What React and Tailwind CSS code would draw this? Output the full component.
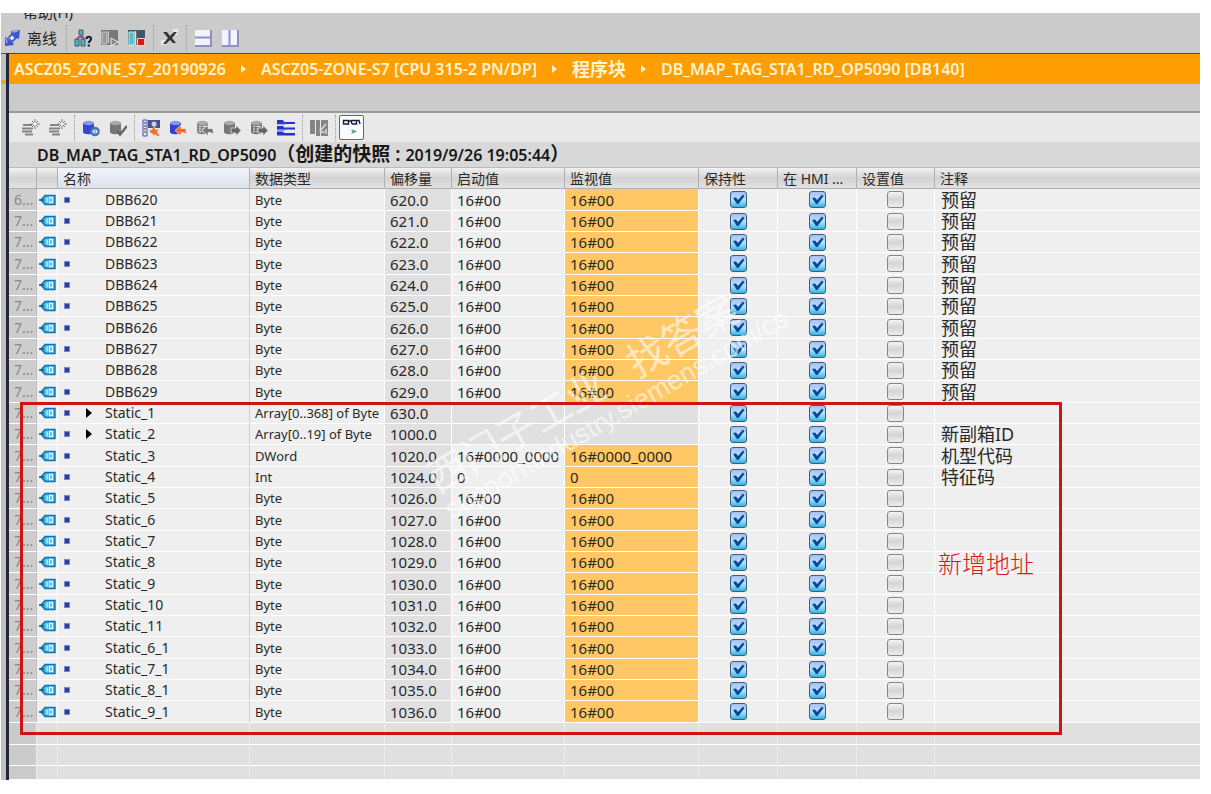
import { clsx } from 'clsx';

const reserved = Array.from({ length: 10 }, (_, i) => ({
  name: `DBB${620 + i}`, type: 'Byte', offset: `${620 + i}.0`, start: '16#00', monitor: '16#00', comment: '预留',
}));

const bytes = ['5', '6', '7', '8', '9', '10', '11', '6_1', '7_1', '8_1', '9_1'].map((n, i) => ({
  name: `Static_${n}`, type: 'Byte', offset: `${1026 + i}.0`, start: '16#00', monitor: '16#00', comment: '',
}));

const rows = [
  ...reserved,
  { name: 'Static_1', type: 'Array[0..368] of Byte', offset: '630.0', expandable: true, comment: '' },
  { name: 'Static_2', type: 'Array[0..19] of Byte', offset: '1000.0', expandable: true, comment: '新副箱ID' },
  { name: 'Static_3', type: 'DWord', offset: '1020.0', start: '16#0000_0000', monitor: '16#0000_0000', comment: '机型代码' },
  { name: 'Static_4', type: 'Int', offset: '1024.0', start: '0', monitor: '0', comment: '特征码' },
  ...bytes,
];

const columns = [
  { label: '', width: 'w-[28px]' },
  { label: '', width: 'w-[21px]' },
  { label: '名称', width: 'w-[192px]' },
  { label: '数据类型', width: 'w-[135px]' },
  { label: '偏移量', width: 'w-[67px]' },
  { label: '启动值', width: 'w-[113px]' },
  { label: '监视值', width: 'w-[134px]' },
  { label: '保持性', width: 'w-[79px]' },
  { label: '在 HMI ...', width: 'w-[79px]' },
  { label: '设置值', width: 'w-[78px]' },
  { label: '注释', width: '' },
];

const Svg = ({ children }) => (
  <svg viewBox="0 0 18 18" className="block h-[18px] w-[18px]" aria-hidden="true">{children}</svg>
);

const ToolButton = ({ label, children }) => (
  <button type="button" aria-label={label} className="h-[18px] w-[18px] shrink-0">
    <Svg>{children}</Svg>
  </button>
);

const Group = ({ children, first, tight }) => (
  <div className={clsx('flex h-[26px] items-center gap-[9px]', !first && 'border-l border-dotted border-[#999]', !first && (tight ? 'pl-[3px]' : 'pl-[7px]'))}>
    {children}
  </div>
);

// Database cylinder, shared by most of the editor toolbar icons
const Cylinder = ({ fill, top, lines }) => (
  <g>
    <path d="M1 4v9c0 3 11 3 11 0V4z" fill={fill} />
    <ellipse cx="6.500" cy="4" rx="5.500" ry="2.200" fill={top} />
    {lines && <path d="M3 7.500h2m1.500 0h4M3 10h2m1.500 0h4M3 12.500h2m1.500 0h4" stroke="#eee" strokeWidth="1.200" />}
  </g>
);

const Arrow = ({ left, fill }) => (
  <path
    d={left ? 'M6 11.500L12 6v3.500h5V12l1 3-4-1.500h-2V17z' : 'M18 11.500L13 6v3H8v5h5v3z'}
    fill={fill} stroke="#eee" strokeWidth=".7"
  />
);

const NewRow = () => (
  <>
    <path d="M1 6h9M0 9.500h11M0 12.500h10M3 15.500h8" stroke="#858585" strokeWidth="2" />
    <path d="M13 0v10M8.500 5H18M10 2l6 6M16 2l-6 6" stroke="#777" strokeWidth="1" />
    <circle cx="13" cy="5" r="1.800" fill="#f5f5f5" />
  </>
);

const TagIcon = () => (
  <svg viewBox="0 0 17 12" className="mx-auto block h-3 w-[17px]" aria-hidden="true">
    <path d="M2 6l4-4.500h10v9H6z" fill="#42b4e8" stroke="#0878b4" strokeWidth="1.400" />
    <path d="M0 6h5" stroke="#075f92" strokeWidth="1.600" />
    <path d="M8 3.500v5M10.500 3.500h3v5h-3z" stroke="#dff5ff" strokeWidth="1.300" fill="none" />
  </svg>
);

const CheckCell = ({ checked, label }) => (
  <td className="border-r border-b border-white bg-[#efefef] p-0">
    <div className="mx-auto grid h-[17px] w-[17px]">
      <input
        type="checkbox"
        aria-label={label}
        defaultChecked={checked}
        className="peer col-start-1 row-start-1 h-[17px] w-[17px] appearance-none rounded-[3px] border border-[#858585] bg-linear-to-b from-[#f4f4f4] via-[#d4d4d4] to-[#eee] checked:border-[#3b5f7c] checked:from-[#a9bff0] checked:via-[#b5e2fa] checked:to-[#22b4e6]"
      />
      <svg viewBox="0 0 17 17" className="pointer-events-none invisible col-start-1 row-start-1 peer-checked:visible" aria-hidden="true">
        <path d="M3 7l3-.5 2 2.500 5-5.500 1.500 1.500L8.500 13H7z" fill="#07479a" />
      </svg>
    </div>
  </td>
);

const Crumb = ({ children, last }) => (
  <>
    <a href="#" className="whitespace-nowrap">{children}</a>
    {!last && (
      <svg viewBox="0 0 5 8" className="mx-[15px] h-2 w-[5px] shrink-0" aria-hidden="true">
        <path d="M0 0l5 4-5 4z" fill="#fff3d0" />
      </svg>
    )}
  </>
);

const MainToolbar = () => (
  <header className="bg-[#cbcbcb]">
    <div className="flex h-2 items-end overflow-hidden pl-[22px] text-[15px]">
      <span className="leading-[18px]">帮助(H)</span>
    </div>
    <div className="flex h-8 items-center gap-[9px] pt-0.5 pl-0.5">
      <button type="button" className="flex items-center gap-1.5 text-[15px]">
        <Svg>
          <path d="M8 2l9-1-1 9-3-1-5-4zM2 8l3 1 5 5 1 2-9 1z" fill="#3f57cc" />
          <path d="M5 8l5-5 4 6-5 5z" fill="#3f57cc" />
          <path d="M3 9l1 5M9 3l6-1" stroke="#98a8f5" strokeWidth="1.500" />
          <path d="M6.500 9l2.500-2.500 2.500 2.500L9 11.500z" fill="#e5eaff" />
        </Svg>
        离线
      </button>
      <div className="flex gap-[7px]">
        <Group>
          <ToolButton label="可访问的设备">
            <path d="M5 1h4v5H5zM1 10h4v7H1zM7 10h4v7H7z" fill="#50b9b5" stroke="#39566c" />
            <path d="M7 6v3M3 10l2-2h4l1 2" stroke="#9c4c91" strokeWidth="2" fill="none" />
            <path d="M12.500 10c0-3 4.500-3 4.500 0 0 2-2.200 2-2.200 4M14.800 15.500v2" stroke="#171b3c" strokeWidth="2.200" fill="none" />
          </ToolButton>
          <ToolButton label="启动 CPU">
            <path d="M0 1h17v15H0z" fill="#777" />
            <path d="M1 3h5v12H1z" fill="#999" stroke="#ccc" />
            <path d="M7.500 2v12" stroke="#ccc" />
            <path d="M10 9l7 4-7 4z" fill="#888" stroke="#eee" />
          </ToolButton>
          <ToolButton label="停止 CPU">
            <path d="M0 1h17v15H0z" fill="#455467" />
            <path d="M1 3h5v13H1z" fill="#46c3c6" stroke="#d0eeee" />
            <path d="M7.500 2v14" stroke="#e0e0e0" strokeWidth="1.500" />
            <path d="M9.500 9.500h7v7h-7z" fill="#dc1515" stroke="#f6caca" />
          </ToolButton>
        </Group>
        <Group>
          <ToolButton label="交叉引用">
            <path d="M11 0h6v6h-4zM0 11h6v5H0z" fill="#e8e8e8" />
            <path d="M2 3h4l3 4 4-4h3l-5 6 4 5h-3l-3-3-4 4H2l5-6z" fill="#343434" />
          </ToolButton>
        </Group>
        <Group>
          <ToolButton label="水平拆分">
            <path d="M1 1h17v17H1z" fill="#8f8fc4" />
            <path d="M1 1h15v6.500H1zM1 9.500h15V16H1z" fill="#f3f3ff" />
          </ToolButton>
          <ToolButton label="垂直拆分">
            <path d="M1 1h17v17H1z" fill="#8f8fc4" />
            <path d="M1 1h6.500v15H1zM9.500 1H16v15H9.500z" fill="#f3f3ff" />
          </ToolButton>
        </Group>
      </div>
    </div>
  </header>
);

const EditorToolbar = () => (
  <div className="flex h-[31px] items-center gap-[7px] border-t-2 border-[#9a9a9a] bg-[#e9e9e9] pl-[13px]">
    <Group first>
      <ToolButton label="插入行"><NewRow /></ToolButton>
      <ToolButton label="添加行"><NewRow /></ToolButton>
    </Group>
    <Group>
      <ToolButton label="复位启动值">
        <Cylinder fill="#3448c8" top="#8796ee" />
        <circle cx="13" cy="12.500" r="4.800" fill="#4774b8" />
        <path d="M10 12.500l2.500-2.500v5zM16 12.500L13.500 10v5z" fill="#e5f2ff" />
      </ToolButton>
      <ToolButton label="更新接口">
        <Cylinder fill="#777" top="#aaa" />
        <path d="M8 12l3 3.500L18 7" stroke="#666" strokeWidth="2.500" fill="none" />
      </ToolButton>
    </Group>
    <Group>
      <ToolButton label="快照">
        <path d="M1 1h4v16H1z" fill="#e8e8f8" stroke="#3e49aa" />
        <path d="M2 4h2M2 7h2M2 10h2M2 13h2" stroke="#333" />
        <path d="M6 1h12v8H6z" fill="#485488" />
        <circle cx="12" cy="5" r="2.500" fill="#cbd2ef" />
        <path d="M7 12.500l6-5v3h4l-2 2.500 3 4h-3l-2-2v2z" fill="#ee7038" stroke="#f7d9c8" strokeWidth=".5" />
      </ToolButton>
      <ToolButton label="复制快照到启动值"><Cylinder fill="#3144cc" top="#8795ef" /><Arrow left fill="#f06a28" /></ToolButton>
      <ToolButton label="加载快照"><Cylinder fill="#888" top="#aaa" lines /><Arrow left fill="#777" /></ToolButton>
      <ToolButton label="加载启动值"><Cylinder fill="#777" top="#aaa" /><Arrow fill="#666" /></ToolButton>
      <ToolButton label="复制启动值"><Cylinder fill="#777" top="#aaa" lines /><Arrow fill="#666" /></ToolButton>
      <ToolButton label="扩展模式">
        <path d="M0 1h6l1 2h11v2H0zM0 7h6l1 1.500h11v2H0v-3.500zM0 12.500h6l1 1.500h11v2.500H0z" fill="#2532cd" />
        <path d="M0 5h8M0 11h8" stroke="#555ff0" />
      </ToolButton>
    </Group>
    <Group>
      <ToolButton label="下载">
        <path d="M0 1h5v14H0zM6 1h4v16H6zM11 1h7v16h-7z" fill="#858585" />
        <path d="M16 5l-6 7M10.500 8v5h4M16 10v5" stroke="#ddd" strokeWidth="1.400" fill="none" />
      </ToolButton>
    </Group>
    <Group tight>
      <button type="button" aria-label="全部监视" className="h-[25px] w-[25px] rounded-[2px] border border-[#3d6fa5] bg-[#fafdff]">
        <svg viewBox="0 0 23 23" className="block h-[23px] w-[23px]" aria-hidden="true">
          <path d="M3.500 4.500h5v3.500h-5zM11.500 4.500h5v3.500h-4l-1-1zM8.500 5h3M17 4.500h2l1 3.500" stroke="#171d42" strokeWidth="1.400" fill="none" />
          <path d="M11 13l6 2.500-6 2.500 1.500-2.500z" fill="#42a769" />
        </svg>
      </button>
    </Group>
  </div>
);

const DataRow = ({ row, index }) => {
  const cell = 'overflow-hidden border-r border-b border-white py-0 pl-[5px] whitespace-nowrap';
  return (
    <tr className={clsx('bg-[#efefef]', index % 3 === 0 ? 'h-[22px]' : 'h-[21px]')}>
      <td className="overflow-hidden border-r border-b border-r-[#bdbdbd] border-b-white bg-[#cdcdcd] py-0 pl-[5px] text-[#888]">{index === 0 ? '6...' : '7...'}</td>
      <td className="border-r border-b border-white p-0"><TagIcon /></td>
      <td className="border-r border-b border-r-[#cfcfcf] border-b-white py-0 pl-1.5">
        <div className="flex items-center">
          <span className="h-1.5 w-1.5 border border-[#7887cb] bg-[#2f3d9e]" />
          <span className="ml-4 w-[19px]">
            {row.expandable && (
              <button type="button" aria-label={`展开 ${row.name}`} className="block">
                <svg viewBox="0 0 6 10" className="block h-2.5 w-1.5"><path d="M0 0l6 5-6 5z" /></svg>
              </button>
            )}
          </span>
          {row.name}
        </div>
      </td>
      <td className={clsx(cell, 'text-[13px]')}>{row.type}</td>
      <td className={clsx(cell, 'bg-[#e0e0e0] text-[15px]')}>{row.offset}</td>
      <td className={clsx(cell, 'text-[15px]', !row.start && 'bg-[#e0e0e0]')}>{row.start}</td>
      <td className={clsx(cell, 'text-[15px]', row.monitor ? 'bg-[#ffc864]' : 'bg-[#e0e0e0]')}>{row.monitor}</td>
      <CheckCell checked label={`${row.name} 保持性`} />
      <CheckCell checked label={`${row.name} HMI`} />
      <CheckCell label={`${row.name} 设置值`} />
      <td className="border-b border-white py-0 pl-1.5 text-[18px] whitespace-nowrap">{row.comment}</td>
    </tr>
  );
};

const EmptyRow = ({ height }) => (
  <tr className={clsx('bg-[#e0e0e0]', height)}>
    {columns.map((_, i) => (
      <td key={i} className={clsx('border-b border-white p-0', i < 10 && 'border-r border-r-[#ececec]', i === 0 && 'bg-[#cbcbcb]')} />
    ))}
  </tr>
);

const TagTable = () => (
  <div className="relative overflow-hidden">
    <table className="w-full table-fixed border-separate border-spacing-0 text-sm leading-5 text-[#292929]">
      <colgroup>
        {columns.map((column, i) => <col key={i} className={column.width} />)}
      </colgroup>
      <thead>
        <tr className="h-[21px]">
          {columns.map((column, i) => (
            <th
              key={i}
              className={clsx(
                'overflow-hidden border-r border-b border-[#b0b0b0] bg-linear-to-b py-0 pl-[5px] text-left text-sm leading-[19px] font-normal whitespace-nowrap last:border-r-0',
                i === 2 ? 'from-[#f1f5fa] to-[#dbe2eb]' : 'from-[#f2f2f2] via-[#d3d3d3] to-[#e2e2e2]',
              )}
            >
              {column.label}
            </th>
          ))}
        </tr>
      </thead>
      <tbody>
        {rows.map((row, i) => <DataRow key={row.name} row={row} index={i} />)}
        <EmptyRow height="h-[22px]" />
        <EmptyRow height="h-[21px]" />
        <EmptyRow height="h-[14px]" />
      </tbody>
    </table>

    {/* Watermark */}
    <div className="pointer-events-none absolute top-[284px] left-[444px] origin-bottom-left -rotate-30 whitespace-nowrap text-white/60">
      <div className="text-[40px] leading-[46px]">西门子工业&nbsp;&nbsp;&nbsp;找答案</div>
      <div className="font-['Liberation_Sans',sans-serif] text-[27px] leading-6">support.industry.siemens.com/cs</div>
    </div>

    {/* Newly added address range */}
    <div className="pointer-events-none absolute top-[234px] left-[11px] flex h-[333px] w-[1042px] items-center justify-end border-[3px] border-[#cf1414] pr-[25px] pb-3 font-['Noto_Sans_CJK_SC',sans-serif] text-2xl font-light text-[#d91515]">
      新增地址
    </div>
  </div>
);

export default function App() {
  return (
    <div className="min-h-screen bg-white pt-[13px] pr-[11px] pl-px font-['Noto_Sans','Noto_Sans_CJK_SC',sans-serif] text-[#222]">
      <MainToolbar />
      <div className="flex">
        <div className="flex w-[5px] shrink-0 flex-col bg-[#bfc1c3]">
          <div className="h-[31px] border-t border-b-4 border-t-[#55544e] border-b-[#eba62e]" />
        </div>
        <main className="min-w-0 flex-1 border-l-[3px] border-[#24263b]">
          <nav aria-label="路径" className="flex h-[31px] items-center border-t border-[#5b4b1b] bg-[#ff9e03] pl-[5px] leading-7 font-semibold text-[#fff3d0]">
            <Crumb>ASCZ05_ZONE_S7_20190926</Crumb>
            <Crumb>ASCZ05-ZONE-S7 [CPU 315-2 PN/DP]</Crumb>
            <Crumb><span className="text-lg leading-7">程序块</span></Crumb>
            <Crumb last>DB_MAP_TAG_STA1_RD_OP5090 [DB140]</Crumb>
          </nav>
          <div className="h-[27px] bg-[#cbcbcb]" />
          <EditorToolbar />
          <h1 className="h-[26px] border-b border-[#bbb] bg-[#d8d8d8] pl-7 text-base leading-[25px] font-semibold whitespace-nowrap text-[#171717]">
            DB_MAP_TAG_STA1_RD_OP5090
            <span className="text-[19px] leading-[25px]">（创建的快照 : </span>
            2019/9/26 19:05:44
            <span className="text-[19px] leading-[25px]">）</span>
          </h1>
          <TagTable />
        </main>
      </div>
    </div>
  );
}
